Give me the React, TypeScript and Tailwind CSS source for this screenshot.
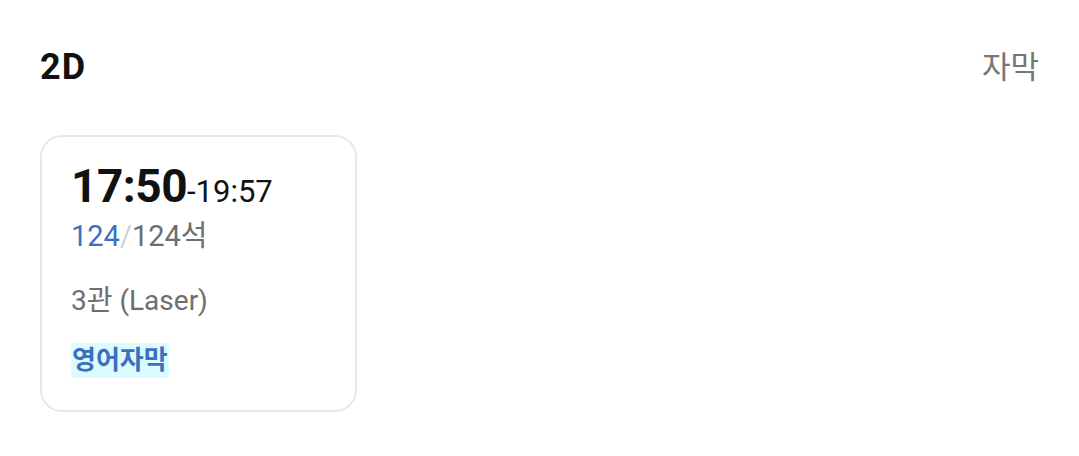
export default function App() {
  return (
    <div className="w-[1079px] h-[456px] bg-white px-[40px] pt-[40px]" style={{ fontFamily: 'Roboto, "Noto Sans CJK KR", sans-serif' }}>
      <div className="flex items-center justify-between h-[54px]">
        <span className="text-[36px] font-bold text-[#111] leading-none tracking-[1px]">2D</span>
        <span className="text-[31px] text-[#767676] leading-none">자막</span>
      </div>
      <div className="mt-[41px] w-[317px] h-[277px] rounded-[22px] border-2 border-[#e8e8e8] pl-[29px] pt-[26px]">
        <div className="flex items-baseline leading-none">
          <span className="text-[46px] font-bold text-[#111] tracking-[-0.5px]">17:50</span>
          <span className="text-[31px] text-[#111]">-19:57</span>
        </div>
        <div className="mt-[13px] text-[29px] leading-none">
          <span className="text-[#3b6fc2]">124</span>
          <span className="text-[#d0d0d0]">/</span>
          <span className="text-[#6e6e6e]">124석</span>
        </div>
        <div className="mt-[36px] text-[28px] leading-none text-[#6e6e6e]">3관 (Laser)</div>
        <div className="mt-[28px]">
          <span className="inline-block bg-[#dcfbff] text-[#3b6fc2] font-bold text-[26px] leading-[35px] px-[1px]">영어자막</span>
        </div>
      </div>
    </div>
  );
}
